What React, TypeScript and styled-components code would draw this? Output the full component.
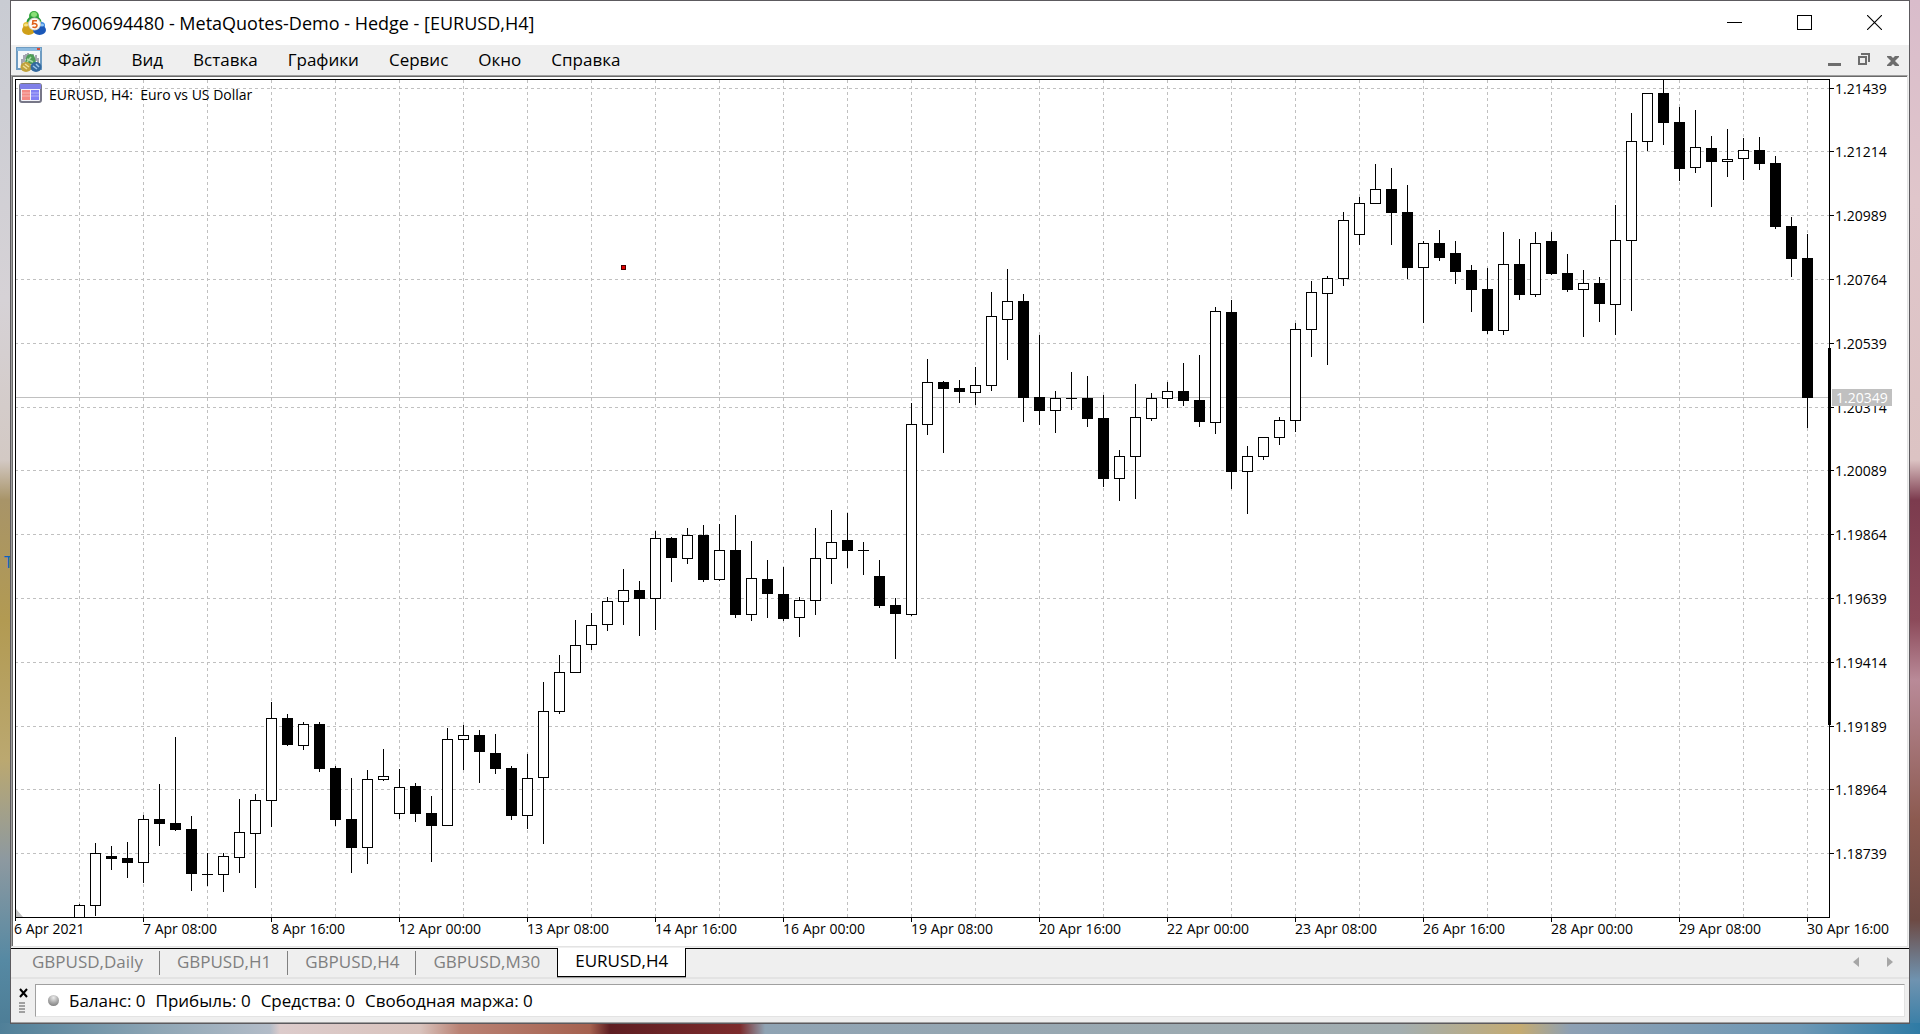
import React from "react";
import styled, { createGlobalStyle, css } from "styled-components";

const GlobalStyle = createGlobalStyle`
  * { box-sizing: border-box; }
  body { margin: 0; background: #8fa3b3; font-family: "Open Sans", "Noto Sans", sans-serif; }
  button { font: inherit; color: inherit; background: none; border: 0; padding: 0; margin: 0; }
`;

const Desktop = styled.div`
  position: relative;
  height: 100vh;
  padding: 0 10px 10px;
  overflow: hidden;
  background:
    linear-gradient(90deg, #4f7f98 0, #8fa6b5 160px, #b3bcc8 270px, #dccbcb 280px, #d9c3bd 420px, #b98274 460px, #a5614f 590px, #5e1e22 610px, #7c2b2c 740px, #8fa3b3 765px, #a3aeb0 1400px, #c4ab72 1520px, #8ea0b3 1570px, #6d98b5 1800px, #2f7ba5 100%) bottom / 100% 11px no-repeat,
    linear-gradient(180deg, #c9ccd3 0, #d6d2d6 300px, #d3c9c4 460px, #a89468 500px, #b29a52 620px, #bba870 760px, #8d99a0 860px, #5689a3 960px, #4c7c95 100%) left / 10px 100% no-repeat,
    linear-gradient(180deg, #d9bccb 0, #e0c6cb 200px, #dcc3c3 460px, #7c3b4e 500px, #8c4a5a 620px, #b98a98 680px, #8c5a50 820px, #6d4a44 920px, #6f93b0 980px, #2f7ba5 100%) right / 11px 100% no-repeat;
`;

const ShortcutLabel = styled.span`
  position: absolute;
  left: 4px;
  top: 551px;
  width: 6px;
  overflow: hidden;
  font-size: 16px;
  line-height: 22px;
  color: #0a62c0;
`;

const Window = styled.main`
  position: relative;
  height: 100%;
  display: flex;
  flex-direction: column;
  border: 1px solid #5c5a5e;
  background: #efefef;
`;

const TitleBar = styled.header`
  height: 44px;
  flex: none;
  display: flex;
  align-items: center;
  background: #fff;
  padding: 0 27px 1px 11px;
`;

const Title = styled.h1`
  flex: 1;
  margin: 0 0 0 5px;
  font-size: 18px;
  line-height: 24px;
  font-weight: 400;
  color: #000;
  white-space: pre;
`;

const Controls = styled.div<{ $gap: number }>`
  display: flex;
  align-items: center;
  gap: ${(p) => p.$gap}px;
`;

const IconButton = styled.button`
  display: flex;
  align-items: center;
  justify-content: center;
`;

const MenuBar = styled.nav`
  height: 30px;
  flex: none;
  display: flex;
  align-items: center;
  padding: 0 10px 0 5px;
`;

const Menu = styled.div`
  flex: 1;
  display: flex;
  gap: 30px;
  margin-left: 16px;
  font-size: 17px;
  line-height: 22px;
`;

const Mdi = styled.section`
  flex: 1;
  min-height: 0;
  display: flex;
  margin-right: 1px;
  margin-bottom: 1px;
  background: #fff;
  border-style: solid;
  border-width: 1px;
  border-color: #a0a0a0 #e3e3e3 #e3e3e3 #a0a0a0;
`;

const ChartFrame = styled.div`
  flex: 1;
  min-width: 0;
  border-top: 1px solid #696969;
  border-left: 1px solid #696969;
`;

const ChartSvg = styled.svg`
  display: block;
  width: 100%;
  height: 100%;
  font-size: 14px;
`;

const TabBar = styled.div`
  height: 31px;
  flex: none;
  display: flex;
  align-items: stretch;
  border-top: 1px solid #000;
  border-bottom: 2px solid #e3e3e3;
  padding: 0 16px 0 4px;
  font-size: 17px;
  line-height: 22px;
`;

const TabList = styled.div`
  flex: 1;
  display: flex;
  align-items: stretch;
`;

const Tab = styled.button<{ $active?: boolean; $divider?: boolean }>`
  position: relative;
  padding: 0 17px 3px;
  color: #7f7f7f;
  ${(p) =>
    p.$divider &&
    css`
      &::after {
        content: "";
        position: absolute;
        right: 0;
        top: 2px;
        bottom: 2px;
        width: 1px;
        background: #808080;
      }
    `}
  ${(p) =>
    p.$active &&
    css`
      margin-top: -1px;
      color: #000;
      background: #fff;
      border: 1px solid #000;
      border-top: 0;
      box-shadow: 0 1px 0 #a0a0a0;
    `}
`;

const Toolbox = styled.footer`
  height: 44px;
  flex: none;
  display: flex;
  padding: 5px 4px 5px 8px;
  border-bottom: 1px solid #a0a0a0;
`;

const ToolboxGrip = styled.div`
  width: 16px;
  flex: none;
`;

const Status = styled.div`
  flex: 1;
  display: flex;
  align-items: center;
  gap: 10px;
  padding-left: 12px;
  background: #fff;
  border: 1px solid #e3e3e3;
  border-color: #a0a0a0 #e3e3e3 #e3e3e3 #a0a0a0;
  font-size: 17px;
  line-height: 22px;
  white-space: pre;
`;

const Ball = styled.span`
  width: 11px;
  height: 11px;
  border-radius: 50%;
  background: radial-gradient(circle at 50% 25%, #ececec 0, #a8a8a8 50%, #6e6e6e 100%);
`;

const AppIcon = () => (
  <svg width="24" height="24" viewBox="0 0 24 24" aria-hidden="true">
    <circle cx="12" cy="5" r="5" fill="#3aab3f" />
    <ellipse cx="12" cy="11" rx="7.500" ry="6" fill="#279a3a" />
    <ellipse cx="12" cy="3.500" rx="3" ry="2.500" fill="#8adf78" />
    <circle cx="4.500" cy="14.500" r="3.500" fill="#e2bd35" />
    <ellipse cx="6.500" cy="19" rx="6.500" ry="5" fill="#cf9f18" />
    <ellipse cx="4" cy="14" rx="2" ry="1.500" fill="#f6e28a" />
    <circle cx="19.500" cy="14.500" r="3.500" fill="#3b86dd" />
    <ellipse cx="17.500" cy="19" rx="6.500" ry="5" fill="#1b58b8" />
    <ellipse cx="20" cy="14" rx="2" ry="1.500" fill="#8fc6f7" />
    <circle cx="12.500" cy="13" r="6.500" fill="#cfcfc8" />
    <circle cx="12.500" cy="13" r="5.500" fill="#fffdf8" />
    <path d="M15 9.700h-4l-.4 3.200c2-.9 4.400-.3 4.400 1.600 0 2.100-2.700 2.400-4.600 1.400" fill="none" stroke="#e0601c" strokeWidth="1.600" />
  </svg>
);

const ChartWindowIcon = () => (
  <svg width="26" height="26" viewBox="0 0 26 26" aria-hidden="true">
    <rect x="1" y="1" width="24" height="21" fill="#f4f8fb" stroke="#6f9cc2" strokeWidth="2" />
    <rect x="1" y="1" width="24" height="3" fill="#8dbbe0" />
    <path d="M21 2h3" stroke="#d0503c" strokeWidth="2" />
    <path d="M6 18V12M8 15V8M10 12V7M12 10V6M17 11V7M20 14V8M22 18V11" stroke="#556" />
    <path d="M14.500 7c4 0 5 4 5.500 10H9c.5-6 1.500-10 5.500-10z" fill="#4d9d58" />
    <path d="M11 12l6 3M11 15l4-5" stroke="#a9dba4" strokeWidth="1.500" />
    <ellipse cx="10" cy="20" rx="5.500" ry="5" fill="#c0a23c" />
    <ellipse cx="20" cy="20" rx="5.500" ry="5" fill="#33699f" />
    <path d="M7 19l4 3M9 17l4 3" stroke="#efe09a" strokeWidth="1.500" />
    <path d="M17 19l4 3M20 17l3 3" stroke="#9cc6ea" strokeWidth="1.500" />
  </svg>
);

const MinimizeIcon = () => (
  <svg width="15" height="15" aria-hidden="true"><path d="M0 7h15v1H0z" /></svg>
);
const MaximizeIcon = () => (
  <svg width="15" height="15" aria-hidden="true"><rect x=".5" y=".5" width="14" height="14" fill="none" stroke="#000" /></svg>
);
const CloseIcon = () => (
  <svg width="15" height="15" aria-hidden="true"><path d="M0 0l15 15M15 0L0 15" stroke="#000" strokeWidth="1.100" /></svg>
);
const ChildMinimizeIcon = () => (
  <svg width="13" height="14" aria-hidden="true"><path d="M0 10h13v3H0z" fill="#6d6d6d" /></svg>
);
const ChildRestoreIcon = () => (
  <svg width="12" height="14" aria-hidden="true" fill="none" stroke="#6d6d6d" strokeWidth="2">
    <path d="M1 4h7v7H1z" /><path d="M3 1h8v8" />
  </svg>
);
const ChildCloseIcon = () => (
  <svg width="12" height="12" aria-hidden="true">
    <path d="M0 2h4l2 2 2-2h4v1L8 7l4 4v1H8l-2-2-2 2H0v-1l4-4-4-4z" fill="#6d6d6d" />
  </svg>
);

/* One bar: [kind, high, body top, body bottom, low]; w = rising, b = falling, d = doji. */
type Bar = ["w" | "b" | "d", number, number, number, number];

const BARS: Bar[] = [
  ["w", 904, 905, 917, 917], ["w", 843, 853, 905, 915], ["b", 846, 856, 858, 869], ["b", 842, 858, 862, 877],
  ["w", 815, 819, 862, 882], ["b", 784, 819, 823, 845], ["b", 737, 823, 829, 830], ["b", 816, 829, 873, 890],
  ["d", 853, 874, 874, 885], ["w", 853, 856, 874, 891], ["w", 799, 832, 857, 872], ["w", 794, 800, 833, 887],
  ["w", 702, 718, 800, 826], ["b", 714, 718, 744, 745], ["w", 722, 724, 745, 749], ["b", 722, 724, 768, 771],
  ["b", 766, 768, 819, 825], ["b", 778, 819, 847, 872], ["w", 770, 779, 847, 863], ["w", 749, 776, 779, 780],
  ["w", 769, 787, 813, 818], ["b", 783, 786, 813, 821], ["b", 796, 813, 825, 861], ["w", 728, 739, 825, 825],
  ["w", 725, 735, 739, 769], ["b", 730, 735, 751, 782], ["b", 734, 753, 768, 773], ["b", 766, 768, 815, 819],
  ["w", 754, 778, 815, 828], ["w", 682, 711, 777, 843], ["w", 655, 672, 711, 713], ["w", 620, 645, 672, 672],
  ["w", 613, 625, 644, 649], ["w", 597, 601, 624, 630], ["w", 569, 590, 601, 624], ["b", 581, 590, 598, 635],
  ["w", 531, 538, 598, 629], ["b", 537, 538, 557, 581], ["w", 528, 535, 558, 563], ["b", 525, 535, 579, 581],
  ["w", 524, 550, 579, 580], ["b", 515, 550, 614, 617], ["w", 541, 578, 614, 620], ["b", 560, 579, 593, 617],
  ["b", 567, 594, 618, 620], ["w", 597, 600, 617, 636], ["w", 528, 558, 600, 614], ["w", 510, 542, 558, 583],
  ["b", 513, 540, 550, 567], ["d", 542, 550, 550, 574], ["b", 560, 576, 605, 607], ["b", 598, 605, 613, 658],
  ["w", 403, 424, 614, 615], ["w", 359, 382, 424, 434], ["b", 381, 382, 388, 452], ["b", 380, 388, 391, 402],
  ["w", 367, 385, 392, 404], ["w", 292, 316, 385, 390], ["w", 269, 301, 319, 359], ["b", 294, 301, 397, 421],
  ["b", 335, 397, 410, 424], ["w", 391, 398, 410, 432], ["d", 372, 398, 398, 409], ["b", 376, 398, 418, 426],
  ["b", 395, 418, 478, 486], ["w", 450, 456, 478, 500], ["w", 384, 417, 456, 498], ["w", 393, 398, 418, 420],
  ["w", 382, 391, 398, 407], ["b", 363, 391, 400, 405], ["b", 355, 400, 421, 426], ["w", 307, 311, 422, 433],
  ["b", 300, 312, 471, 488], ["w", 446, 456, 471, 513], ["w", 437, 437, 456, 459], ["w", 417, 420, 437, 444],
  ["w", 323, 329, 420, 431], ["w", 281, 292, 329, 356], ["w", 276, 278, 293, 364], ["w", 212, 220, 278, 285],
  ["w", 197, 203, 234, 244], ["w", 164, 189, 203, 203], ["b", 168, 189, 212, 244], ["b", 185, 212, 267, 278],
  ["w", 241, 243, 267, 322], ["b", 230, 243, 257, 260], ["b", 241, 253, 271, 283], ["b", 265, 270, 289, 311],
  ["b", 268, 289, 330, 333], ["w", 232, 264, 330, 334], ["b", 239, 264, 294, 299], ["w", 232, 243, 294, 296],
  ["b", 232, 241, 273, 274], ["b", 254, 273, 289, 291], ["w", 270, 283, 289, 336], ["b", 277, 283, 303, 321],
  ["w", 205, 240, 304, 334], ["w", 113, 141, 240, 310], ["w", 93, 93, 141, 150], ["b", 79, 93, 122, 144],
  ["b", 107, 122, 168, 180], ["w", 110, 147, 167, 172], ["b", 136, 148, 161, 206], ["w", 129, 159, 161, 176],
  ["w", 138, 150, 158, 179], ["b", 137, 150, 163, 169], ["b", 156, 163, 226, 228], ["b", 217, 226, 258, 276],
  ["b", 234, 258, 397, 427],
];

const PRICES: [number, string][] = [
  [88, "1.21439"], [151, "1.21214"], [215, "1.20989"], [279, "1.20764"], [343, "1.20539"], [407, "1.20314"],
  [470, "1.20089"], [534, "1.19864"], [598, "1.19639"], [662, "1.19414"], [726, "1.19189"], [789, "1.18964"],
  [853, "1.18739"],
];

const DATES = [
  "7 Apr 08:00", "8 Apr 16:00", "12 Apr 00:00", "13 Apr 08:00", "14 Apr 16:00", "16 Apr 00:00", "19 Apr 08:00",
  "20 Apr 16:00", "22 Apr 00:00", "23 Apr 08:00", "26 Apr 16:00", "28 Apr 00:00", "29 Apr 08:00", "30 Apr 16:00",
];

const LEFT = 15;
const RIGHT = 1829;
const TOP = 79;
const BOTTOM = 917;
const FIRST_BAR = 79;
const BAR_STEP = 16;

const Candle = ({ bar, x }: { bar: Bar; x: number }) => {
  const [kind, high, top, bottom, low] = bar;
  return (
    <g>
      <rect x={x} y={high} width="1" height={low - high + 1} />
      <rect x={x - 5} y={top} width="11" height={bottom - top + 1} />
      {kind === "w" && <rect x={x - 4} y={top + 1} width="9" height={bottom - top - 1} fill="#fff" />}
    </g>
  );
};

const Chart = () => {
  const columns = Array.from({ length: 28 }, (_, i) => FIRST_BAR + i * 64);
  return (
    <ChartSvg viewBox="13 77 1894 867" preserveAspectRatio="xMinYMin meet" role="img" aria-label="EURUSD, H4">
      <g stroke="#c0c0c0" strokeDasharray="3 3" shapeRendering="crispEdges">
        {PRICES.map(([y]) => <path key={y} d={`M${LEFT} ${y + 0.5}H${RIGHT}`} />)}
        {columns.map((x) => <path key={x} d={`M${x + 0.5} ${TOP + 1}V${BOTTOM}`} />)}
      </g>
      <rect x={LEFT} y="397" width={RIGHT - LEFT} height="1" fill="#c0c0c0" />
      <path d={`M${LEFT + 1} 909v8h7z`} fill="#c0c0c0" />
      <g shapeRendering="crispEdges">
        {BARS.map((bar, i) => <Candle key={i} bar={bar} x={FIRST_BAR + i * BAR_STEP} />)}
        <rect x={LEFT} y={TOP} width={RIGHT - LEFT + 1} height="1" />
        <rect x={LEFT} y={BOTTOM} width={RIGHT - LEFT + 1} height="1" />
        <rect x={LEFT} y={TOP} width="1" height={BOTTOM - TOP + 4} />
        <rect x={RIGHT} y={TOP} width="1" height={BOTTOM - TOP + 1} />
        <rect x={RIGHT - 1} y="348" width="3" height="377" />
        {PRICES.map(([y]) => <rect key={y} x={RIGHT} y={y} width="5" height="1" />)}
        {DATES.map((d, i) => <rect key={d} x={143 + i * 128} y={BOTTOM} width="1" height="5" />)}
        <rect x="621" y="265" width="5" height="5" fill="#400" />
        <rect x="622" y="266" width="3" height="3" fill="#e00000" />
      </g>
      {PRICES.map(([y, label]) => <text key={y} x="1835" y={y + 6}>{label}</text>)}
      <rect x="1832" y="389" width="60" height="17" fill="#c0c0c0" />
      <text x="1836" y="403" fill="#fff">1.20349</text>
      <text x="14" y="934">6 Apr 2021</text>
      {DATES.map((d, i) => <text key={d} x={143 + i * 128} y="934">{d}</text>)}
      <text x="49" y="100" xmlSpace="preserve">EURUSD, H4:  Euro vs US Dollar</text>
      <rect x="20" y="84" width="21" height="18" rx="2" fill="#f4f4fa" stroke="#777787" strokeWidth="2" />
      <path d="M20 84h21v5H20z" fill="#7f7fe8" />
      <path d="M22 90h8v10h-8z" fill="#f48a84" />
      <path d="M31 90h8v10h-8z" fill="#8080f4" />
      <path d="M22 93h8M22 96h8M31 93h8M31 96h8" stroke="#fff" strokeOpacity=".4" />
    </ChartSvg>
  );
};

const MENU = ["Файл", "Вид", "Вставка", "Графики", "Сервис", "Окно", "Справка"];
const TABS = ["GBPUSD,Daily", "GBPUSD,H1", "GBPUSD,H4", "GBPUSD,M30", "EURUSD,H4"];

export default function App() {
  return (
    <>
      <GlobalStyle />
      <Desktop>
        <ShortcutLabel>T</ShortcutLabel>
        <Window>
          <TitleBar>
            <AppIcon />
            <Title>79600694480 - MetaQuotes-Demo - Hedge - [EURUSD,H4]</Title>
            <Controls $gap={55}>
              <IconButton aria-label="Свернуть"><MinimizeIcon /></IconButton>
              <IconButton aria-label="Развернуть"><MaximizeIcon /></IconButton>
              <IconButton aria-label="Закрыть"><CloseIcon /></IconButton>
            </Controls>
          </TitleBar>
          <MenuBar>
            <ChartWindowIcon />
            <Menu>{MENU.map((m) => <button key={m}>{m}</button>)}</Menu>
            <Controls $gap={17}>
              <IconButton aria-label="Свернуть график"><ChildMinimizeIcon /></IconButton>
              <IconButton aria-label="Восстановить график"><ChildRestoreIcon /></IconButton>
              <IconButton aria-label="Закрыть график"><ChildCloseIcon /></IconButton>
            </Controls>
          </MenuBar>
          <Mdi>
            <ChartFrame><Chart /></ChartFrame>
          </Mdi>
          <TabBar>
            <TabList role="tablist">
              {TABS.map((t, i) => (
                <Tab key={t} role="tab" aria-selected={i === 4} $active={i === 4} $divider={i < 3}>{t}</Tab>
              ))}
            </TabList>
            <Controls $gap={26}>
              <IconButton aria-label="Назад">
                <svg width="7" height="12" aria-hidden="true"><path d="M6 0v10L0 5z" fill="#a6a6a6" /></svg>
              </IconButton>
              <IconButton aria-label="Вперёд">
                <svg width="7" height="12" aria-hidden="true"><path d="M1 0v10l6-5z" fill="#a6a6a6" /></svg>
              </IconButton>
            </Controls>
          </TabBar>
          <Toolbox>
            <ToolboxGrip>
              <IconButton aria-label="Закрыть панель">
                <svg width="9" height="31" aria-hidden="true">
                  <path d="M1 5l7 8M8 5l-7 8" stroke="#000" strokeWidth="2" />
                  <path d="M0 19h6M0 22h6M0 25h6M0 28h6" stroke="#a0a0a0" strokeWidth="2" />
                </svg>
              </IconButton>
            </ToolboxGrip>
            <Status>
              <Ball />
              <span>Баланс: 0</span>
              <span>Прибыль: 0</span>
              <span>Средства: 0</span>
              <span>Свободная маржа: 0</span>
            </Status>
          </Toolbox>
        </Window>
      </Desktop>
    </>
  );
}
